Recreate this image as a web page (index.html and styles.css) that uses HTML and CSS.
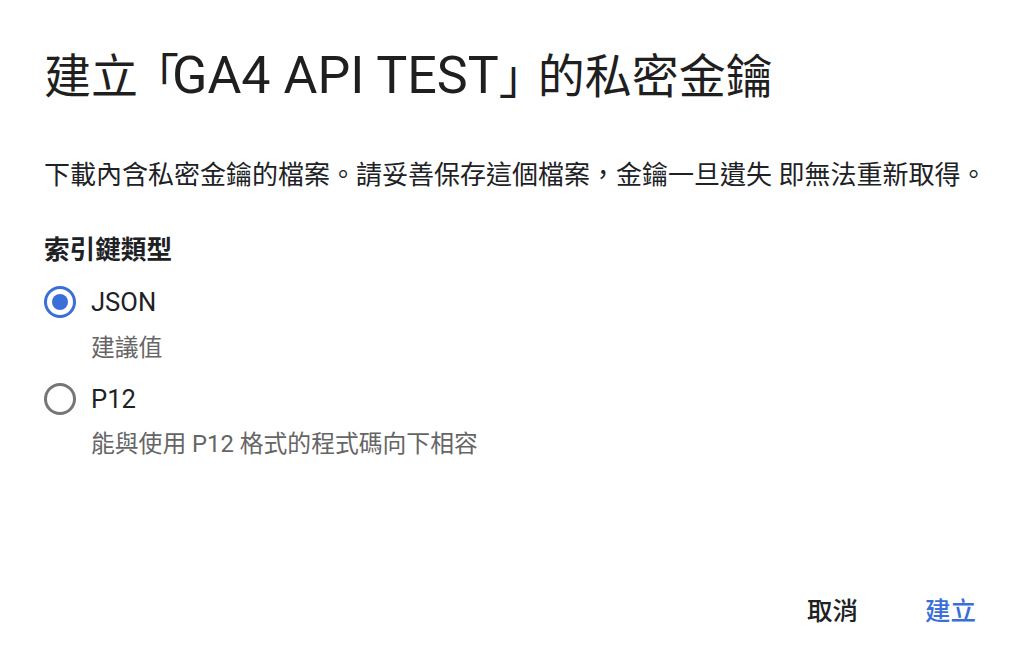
FILE: index.html
```html
<!DOCTYPE html>
<html lang="zh-Hant">
<head>
<meta charset="utf-8">
<title>建立私密金鑰</title>
<link rel="stylesheet" href="styles.css">
</head>
<body>
<div class="dialog">
  <h1 class="title">建<span class="tight-a">立</span><span class="br-open">「</span><span class="latin">GA4 API TEST</span><span class="br-close">」</span>的私密金鑰</h1>
  <p class="intro">下載內含私密金鑰的檔案。請妥善保存這個檔案，金鑰一旦遺失 即無法重新取得。</p>
  <div class="group-label">索引鍵類型</div>
  <div class="option option-first">
    <span class="radio radio-on"><span class="dot"></span></span>
    <span class="option-label">JSON</span>
  </div>
  <div class="option-desc">建議值</div>
  <div class="option option-second">
    <span class="radio"></span>
    <span class="option-label">P12</span>
  </div>
  <div class="option-desc">能與使用 P12 格式的程式碼向下相容</div>
  <div class="actions">
    <button class="btn btn-cancel">取消</button>
    <button class="btn btn-primary">建立</button>
  </div>
</div>
</body>
</html>
```

FILE: styles.css
```css
html, body {
  margin: 0;
  padding: 0;
  background: #ffffff;
}
body {
  font-family: Roboto, "Noto Sans CJK TC", sans-serif;
  color: #202124;
}
.dialog {
  box-sizing: border-box;
  height: 654px;
  padding: 48px 52px 25px 44px;
  display: flex;
  flex-direction: column;
}
.title {
  margin: 0;
  font-size: 47px;
  line-height: 56px;
  font-weight: 400;
  color: #1f1f1f;
  white-space: nowrap;
}
.title .latin {
  font-size: 52px;
}
.tight-a { letter-spacing: -6px; }
.br-open { letter-spacing: -7px; }
.br-close { letter-spacing: -8px; }
.intro {
  margin: 52px 0 0;
  font-size: 26px;
  line-height: 36px;
  color: #202124;
  white-space: nowrap;
}
.group-label {
  margin-top: 39px;
  font-size: 25.6px;
  line-height: 36px;
  font-weight: 700;
  color: #202124;
}
.option {
  display: flex;
  align-items: center;
  height: 48px;
}
.option-first { margin-top: 10px; }
.option-second { margin-top: 9px; }
.radio {
  box-sizing: border-box;
  width: 32px;
  height: 32px;
  border-radius: 50%;
  border: 3.5px solid #767676;
  display: flex;
  align-items: center;
  justify-content: center;
}
.radio-on {
  border-color: #3a6fd8;
}
.dot {
  width: 16px;
  height: 16px;
  border-radius: 50%;
  background: #3a6fd8;
}
.option-label {
  margin-left: 15px;
  font-size: 25.6px;
  color: #202124;
}
.option-desc {
  margin: 4px 0 0 47px;
  font-size: 23.8px;
  line-height: 36px;
  color: #656565;
}
.option-second + .option-desc { margin-top: 3px; }
.actions {
  margin-top: auto;
  display: flex;
  justify-content: flex-end;
  gap: 67px;
}
.btn {
  border: none;
  background: none;
  padding: 0;
  font-family: Roboto, "Noto Sans CJK TC", sans-serif;
  font-size: 25.5px;
  line-height: 36px;
  font-weight: 500;
}
.btn-cancel { color: #202124; }
.btn-primary { color: #3a6fd8; }
```
